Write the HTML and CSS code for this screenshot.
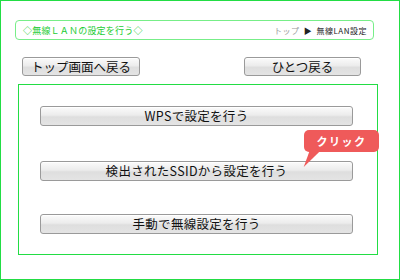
FILE: index.html
```html
<!DOCTYPE html>
<html lang="ja">
<head>
    <meta charset="UTF-8">
    <title>無線LANの設定を行う</title>
    <link rel="stylesheet" href="styles.css">
</head>
<body>
    <div class="page">
        <header class="titlebar">
            <h1>◇無線ＬＡＮの設定を行う◇</h1>
            <div class="crumbs"><span class="crumb-top">トップ</span> ▶ 無線LAN設定</div>
        </header>

        <nav class="navrow">
            <button class="btn btn-nav">トップ画面へ戻る</button>
            <button class="btn btn-nav">ひとつ戻る</button>
        </nav>

        <main class="panel">
            <button class="btn btn-wide">WPSで設定を行う</button>
            <div class="hint-wrap">
                <button class="btn btn-wide">検出されたSSIDから設定を行う</button>
                <div class="bubble">クリック</div>
            </div>
            <button class="btn btn-wide">手動で無線設定を行う</button>
        </main>
    </div>
</body>
</html>
```

FILE: styles.css
```css
body {
    margin: 0;
    padding: 0;
    background: #ffffff;
    font-family: "Noto Sans CJK JP", "Noto Sans", sans-serif;
}
.page {
    width: 400px;
    height: 280px;
    box-sizing: border-box;
    border: 1px solid #22dd44;
    padding: 19px 0 0 14px;
}
.titlebar {
    width: 359px;
    height: 20px;
    box-sizing: border-box;
    border: 1px solid #77ee88;
    border-radius: 4px;
    display: flex;
    align-items: center;
    justify-content: space-between;
    padding: 0 6px 0 7px;
}
h1 {
    margin: 0;
    font-size: 9px;
    font-weight: normal;
    color: #22cc33;
    letter-spacing: 0.2px;
}
.crumbs {
    font-size: 8px;
    color: #222222;
    letter-spacing: 0.5px;
    word-spacing: 2px;
}
.crumb-top {
    color: #999999;
}
.navrow {
    display: flex;
    justify-content: space-between;
    width: 339px;
    margin: 17px 0 0 7px;
}
.btn {
    font-family: "Noto Sans CJK JP", "Noto Sans", sans-serif;
    font-size: 12.5px;
    color: #111111;
    padding: 0;
    height: 19px;
    line-height: 17px;
    border: 1px solid #9a9a9a;
    border-radius: 3px;
    background: linear-gradient(#fbfbfb, #ececec 45%, #dedede 55%, #e4e4e4);
    box-shadow: inset 0 1px 0 #ffffff;
}
.btn-nav {
    width: 118px;
}
.navrow .btn-nav:last-child {
    width: 117px;
}
.panel {
    width: 360px;
    height: 171px;
    box-sizing: border-box;
    border: 1px solid #22dd44;
    margin: 8px 0 0 3px;
    padding: 21px 0 0 21px;
    display: flex;
    flex-direction: column;
    gap: 31px;
}
.btn-wide {
    width: 313px;
    height: 20px;
    line-height: 18px;
    letter-spacing: 0.3px;
}
.hint-wrap {
    position: relative;
    margin-bottom: 2px;
}
.bubble {
    position: absolute;
    left: 264px;
    top: -27px;
    width: 75px;
    height: 22px;
    border-radius: 5px;
    background: #ef5a5a;
    color: #ffffff;
    font-size: 11px;
    font-weight: bold;
    line-height: 22px;
    text-align: center;
    letter-spacing: 1.5px;
}
.bubble::after {
    content: "";
    position: absolute;
    left: 3px;
    top: 19px;
    border-style: solid;
    border-width: 0 0 18px 12px;
    border-color: transparent transparent transparent #ef5a5a;
    transform: skewX(-20deg);
}
```
